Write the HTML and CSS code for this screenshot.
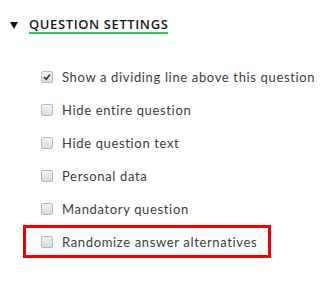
FILE: index.html
```html
<!DOCTYPE html>
<html>
<head>
<meta charset="utf-8">
<link rel="stylesheet" href="styles.css">
</head>
<body>
<div class="panel">
  <div class="header">
    <svg class="arrow" viewBox="0 0 8 7" width="8" height="7"><path d="M0 0 H8 L4 7 Z" fill="#111"/></svg>
    <span class="title">QUESTION SETTINGS</span>
  </div>
  <ul class="options">
    <li class="option"><span class="box checked"><svg viewBox="0 0 12 12" width="10" height="10"><path d="M2.5 6.2 L5 8.6 L9.6 3" fill="none" stroke="#3a3a3a" stroke-width="2"/></svg></span><span class="label">Show a dividing line above this question</span></li>
    <li class="option"><span class="box"></span><span class="label">Hide entire question</span></li>
    <li class="option"><span class="box"></span><span class="label">Hide question text</span></li>
    <li class="option"><span class="box"></span><span class="label">Personal data</span></li>
    <li class="option"><span class="box"></span><span class="label">Mandatory question</span></li>
    <li class="option highlight"><span class="box"></span><span class="label">Randomize answer alternatives</span></li>
  </ul>
</div>
</body>
</html>
```
FILE: styles.css
```css
html, body {
  margin: 0;
  padding: 0;
  background: #fff;
}
body {
  font-family: "Lato", "Liberation Sans", sans-serif;
  color: #3d3d3d;
}
.panel {
  padding: 16px 0 0 10px;
}
.header {
  display: flex;
  align-items: center;
  height: 18px;
}
.arrow {
  margin-right: 11px;
  flex: none;
}
.title {
  font-family: "Open Sans", "Liberation Sans", sans-serif;
  font-size: 13px;
  font-weight: 600;
  letter-spacing: 0.6px;
  color: #1a1a1a;
  border-bottom: 2px solid #3cc45c;
  line-height: 16px;
}
.options {
  list-style: none;
  margin: 26px 0 0 0;
  padding: 0;
}
.option {
  display: flex;
  align-items: center;
  height: 33px;
  padding-left: 31px;
  box-sizing: border-box;
}
.box {
  width: 12px;
  height: 12px;
  box-sizing: border-box;
  border: 1px solid #b9b9b9;
  border-radius: 2px;
  background: linear-gradient(#f2f2f2, #dcdcdc);
  margin-right: 9px;
  display: flex;
  align-items: center;
  justify-content: center;
  flex: none;
}
.label {
  font-size: 13px;
  letter-spacing: 0.65px;
  color: #3d3d3d;
}
.highlight {
  margin-left: 13px;
  padding-left: 15px;
  width: 248px;
  border: 3px solid #f00000;
}
```
